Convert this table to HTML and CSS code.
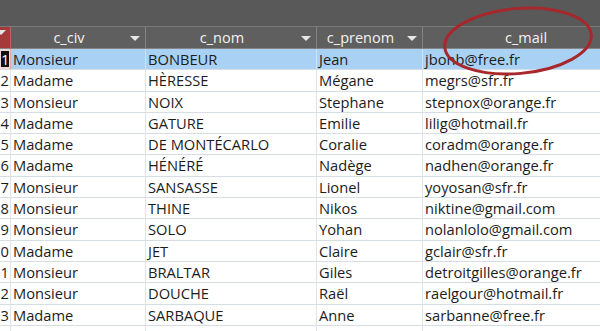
FILE: index.html
```html
<!DOCTYPE html>
<html lang="fr">
<head>
<meta charset="utf-8">
<title>Table</title>
<link rel="stylesheet" href="styles.css">
</head>
<body>
<div class="app">
  <div class="topbar"></div>
  <div class="grid">
    <div class="hd sel"><span class="arrow cut"></span></div>
    <div class="hd"><span class="hl">c_civ</span><span class="arrow"></span></div>
    <div class="hd"><span class="hl">c_nom</span><span class="arrow"></span></div>
    <div class="hd"><span class="hl">c_prenom</span><span class="arrow"></span></div>
    <div class="hd"><span class="hl">c_mail</span><span class="arrow"></span></div>

    <div class="c num cur"><span class="box">1</span></div><div class="c hi">Monsieur</div><div class="c hi">BONBEUR</div><div class="c hi">Jean</div><div class="c hi">jbonb@free.fr</div>
    <div class="c num">2</div><div class="c">Madame</div><div class="c">HÈRESSE</div><div class="c">Mégane</div><div class="c">megrs@sfr.fr</div>
    <div class="c num">3</div><div class="c">Monsieur</div><div class="c">NOIX</div><div class="c">Stephane</div><div class="c">stepnox@orange.fr</div>
    <div class="c num">4</div><div class="c">Madame</div><div class="c">GATURE</div><div class="c">Emilie</div><div class="c">lilig@hotmail.fr</div>
    <div class="c num">5</div><div class="c">Madame</div><div class="c">DE MONTÉCARLO</div><div class="c">Coralie</div><div class="c">coradm@orange.fr</div>
    <div class="c num">6</div><div class="c">Madame</div><div class="c">HÉNÉRÉ</div><div class="c">Nadège</div><div class="c">nadhen@orange.fr</div>
    <div class="c num">7</div><div class="c">Monsieur</div><div class="c">SANSASSE</div><div class="c">Lionel</div><div class="c">yoyosan@sfr.fr</div>
    <div class="c num">8</div><div class="c">Monsieur</div><div class="c">THINE</div><div class="c">Nikos</div><div class="c">niktine@gmail.com</div>
    <div class="c num">9</div><div class="c">Monsieur</div><div class="c">SOLO</div><div class="c">Yohan</div><div class="c">nolanlolo@gmail.com</div>
    <div class="c num">0</div><div class="c">Madame</div><div class="c">JET</div><div class="c">Claire</div><div class="c">gclair@sfr.fr</div>
    <div class="c num">1</div><div class="c">Monsieur</div><div class="c">BRALTAR</div><div class="c">Giles</div><div class="c">detroitgilles@orange.fr</div>
    <div class="c num">2</div><div class="c">Monsieur</div><div class="c">DOUCHE</div><div class="c">Raël</div><div class="c">raelgour@hotmail.fr</div>
    <div class="c num">3</div><div class="c">Madame</div><div class="c">SARBAQUE</div><div class="c">Anne</div><div class="c">sarbanne@free.fr</div>
    <div class="c num"></div><div class="c"></div><div class="c"></div><div class="c"></div><div class="c"></div>
  </div>
  <svg class="ring" width="600" height="331" viewBox="0 0 600 331">
    <ellipse cx="518" cy="41" rx="73.5" ry="32.5" transform="rotate(-5 518 41)" fill="none" stroke="#a7272c" stroke-width="3"/>
  </svg>
</div>
</body>
</html>
```
FILE: styles.css
```css
html, body {
  margin: 0;
  padding: 0;
  background: #ffffff;
}
.app {
  position: relative;
  width: 600px;
  height: 331px;
  overflow: hidden;
  font-family: "Open Sans", "Noto Sans", sans-serif;
}
.topbar {
  height: 26px;
  background: #595959;
  border-bottom: 1px solid #7a7a7a;
}
.grid {
  display: grid;
  grid-template-columns: 11px 135px 171px 106px 225px;
  grid-template-rows: 22px;
  grid-auto-rows: 21.3px;
  width: 648px;
}
.hd {
  box-sizing: border-box;
  background: #5f5f5f;
  border-right: 1px solid #858585;
  border-bottom: 1px solid #858585;
  color: #f2f2f2;
  font-size: 14.5px;
  display: flex;
  align-items: center;
  position: relative;
  padding-right: 18px;
  overflow: hidden;
}
.hd .hl {
  flex: 1;
  text-align: center;
  line-height: 20px;
}
.hd.sel {
  background: #a53a3a;
  border-right-color: #c06060;
  padding: 0;
}
.arrow {
  position: absolute;
  right: 5px;
  top: 9px;
  width: 0;
  height: 0;
  border-left: 5px solid transparent;
  border-right: 5px solid transparent;
  border-top: 5px solid #e6e6e6;
}
.arrow.cut {
  right: auto;
  left: -4px;
  top: 3px;
}
.c {
  box-sizing: border-box;
  border-right: 1px solid #dfe4ea;
  border-bottom: 1px solid #d6dde4;
  color: #1c1c1c;
  font-size: 14.7px;
  line-height: 20px;
  padding-left: 2px;
  white-space: nowrap;
  overflow: hidden;
}
.c.hi {
  background: #a9d1f3;
  border-right-color: #cfe3f5;
}
.c.num {
  padding: 0;
  text-align: right;
  padding-right: 1px;
}
.c.cur {
  background: #f4d6d6;
  border-right-color: #e3a8a8;
  display: flex;
  align-items: center;
  justify-content: flex-end;
}
.box {
  display: block;
  background: #111111;
  color: #ffffff;
  width: 8px;
  height: 16px;
  line-height: 16px;
  text-align: center;
}
.ring {
  position: absolute;
  left: 0;
  top: 0;
  pointer-events: none;
}
```
